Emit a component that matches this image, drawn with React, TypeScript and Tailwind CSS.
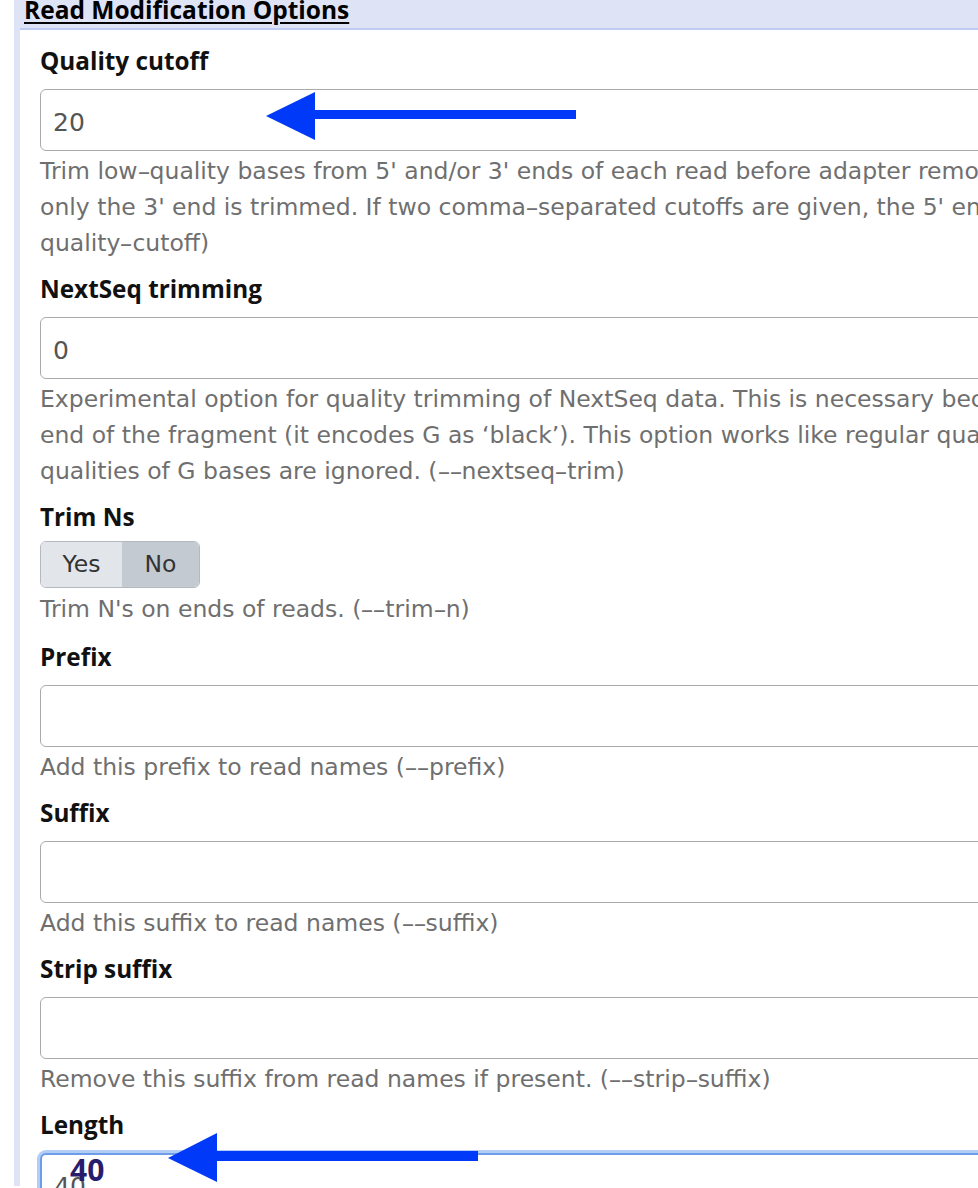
import type { ReactNode } from 'react';

const labelFont = "font-['Open_Sans',sans-serif] font-bold text-[24.3px] leading-[36px] text-[#111]";
const helpFont = "font-['DejaVu_Sans',sans-serif] text-[23.5px] leading-[36px] text-[#6f6f6f] whitespace-nowrap";

// the reference font draws hyphens longer, so stretch them a little
const withDashes = (text: string) =>
  text.split('-').flatMap((part, i) =>
    i === 0
      ? [part]
      : [
          <span key={i} className="inline-block w-[12px] text-center scale-x-[1.6]">
            -
          </span>,
          part,
        ]
  );

const Label = ({ children, className = '' }: { children: ReactNode; className?: string }) => (
  <div className={`${labelFont} h-[32px] ${className}`}>{children}</div>
);

const Box = ({ value = '', focused = false }: { value?: string; focused?: boolean }) => (
  <div
    className={`mt-[14px] h-[62px] w-full rounded-[6px] bg-white flex items-center pl-[12px] pt-[4px] font-['DejaVu_Sans',sans-serif] text-[25px] leading-[25px] text-[#555] ${
      focused
        ? 'border-2 border-[#6d9ceb] shadow-[0_0_0_3px_#b3cdf5]'
        : 'border border-[#aaaaaa]'
    }`}
  >
    {value}
  </div>
);

const Help = ({ lines, className = 'mt-[2px]' }: { lines: string[]; className?: string }) => (
  <div className={className}>
    {lines.map((line) => (
      <div key={line} className={helpFont}>
        {withDashes(line)}
      </div>
    ))}
  </div>
);

const App = () => {
  return (
    <div className="relative w-[978px] h-[1188px] overflow-hidden bg-white">
      <div className="ml-[14px] w-[1200px] h-full border-l-[6px] border-[#dfe3f6]">
        {/* Section header */}
        <div className="h-[32px] bg-[#dfe3f6] border-b-2 border-[#bfcbf0] pl-[4px]">
          <div className="-mt-[2px] font-['Open_Sans',sans-serif] font-bold text-[24.5px] leading-[24px] text-black underline underline-offset-[3px]">
            Read Modification Options
          </div>
        </div>

        {/* Fields */}
        <div className="pt-[13px] pl-[20px] flex flex-col">
          <Label>Quality cutoff</Label>
          <Box value="20" />
          <Help
            lines={[
              "Trim low-quality bases from 5' and/or 3' ends of each read before adapter removal. Applied to both reads if data is paired. If one value is given,",
              "only the 3' end is trimmed. If two comma-separated cutoffs are given, the 5' end is trimmed with the first cutoff, the 3' end with the second. (--",
              'quality-cutoff)',
            ]}
          />

          <Label className="mt-[10px]">NextSeq trimming</Label>
          <Box value="0" />
          <Help
            lines={[
              'Experimental option for quality trimming of NextSeq data. This is necessary because that instrument assigns a high quality to G bases at the',
              'end of the fragment (it encodes G as \u2018black\u2019). This option works like regular quality trimming (where one would use -q 20 instead), except that the',
              'qualities of G bases are ignored. (--nextseq-trim)',
            ]}
          />

          <Label className="mt-[10px]">Trim Ns</Label>
          <div className="mt-[10px] flex h-[47px] w-fit rounded-[6px] border border-[#b3b9bf] overflow-hidden font-['DejaVu_Sans',sans-serif] text-[23.5px] text-[#333]">
            <div className="w-[81px] flex items-center justify-center bg-[#e2e5e9]">Yes</div>
            <div className="w-[77px] flex items-center justify-center bg-[#c3cad2]">No</div>
          </div>
          <Help className="mt-[3px]" lines={["Trim N's on ends of reads. (--trim-n)"]} />

          <Label className="mt-[12px]">Prefix</Label>
          <Box />
          <Help lines={['Add this prefix to read names (--prefix)']} />

          <Label className="mt-[10px]">Suffix</Label>
          <Box />
          <Help lines={['Add this suffix to read names (--suffix)']} />

          <Label className="mt-[10px]">Strip suffix</Label>
          <Box />
          <Help lines={['Remove this suffix from read names if present. (--strip-suffix)']} />

          <Label className="mt-[10px]">Length</Label>
          <Box value="40" focused />
        </div>
      </div>

      {/* Annotation arrows */}
      <svg className="absolute inset-0 pointer-events-none" width="978" height="1188" viewBox="0 0 978 1188">
        <polygon points="266,116 315,92 315,140" fill="#0039f7" />
        <rect x="314" y="110" width="262" height="9" fill="#0039f7" />
        <polygon points="168,1158 217,1133 217,1182" fill="#0039f7" />
        <rect x="216" y="1151" width="262" height="10" fill="#0039f7" />
      </svg>
      <div className="absolute left-[70px] top-[1155px] font-['Open_Sans',sans-serif] font-bold text-[30px] leading-[30px] text-[#2a1c6c]">
        40
      </div>
    </div>
  );
};

export default App;
